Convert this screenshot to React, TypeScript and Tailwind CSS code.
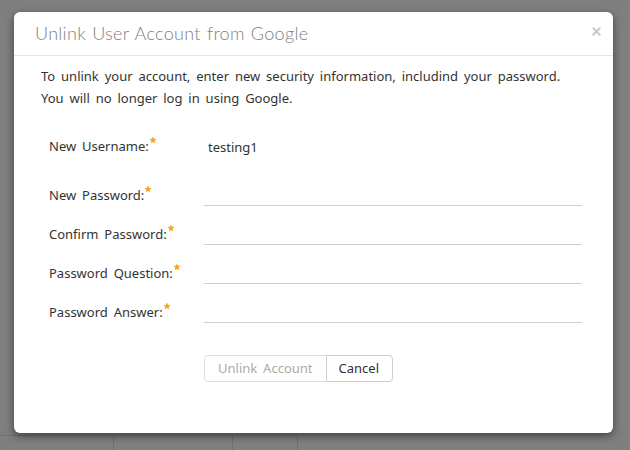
import { X } from "lucide-react"

const fields = [
    { label: "New Username:", value: "testing1" },
    { label: "New Password:" },
    { label: "Confirm Password:" },
    { label: "Password Question:" },
    { label: "Password Answer:" },
]

const Star = () => (
    <svg width="8" height="8" viewBox="0 0 24 24" className="mb-2">
        <path
            fill="#f5a623"
            d="M12 1.5l3.2 6.9 7.3.8-5.5 5 1.6 7.3L12 17.8l-6.6 3.7 1.6-7.3-5.5-5 7.3-.8z"
        />
    </svg>
)

export default function App() {
    return (
        <div
            className="relative h-[450px] w-[630px] overflow-hidden bg-[#7f7f7f] pt-3 [word-spacing:2.5px]"
            style={{ fontFamily: "'Noto Sans', 'Open Sans', sans-serif" }}
        >
            {/* page behind the overlay */}
            <div className="absolute inset-x-0 bottom-0 flex h-[15px] text-[11px] text-[#222]">
                <div className="w-[113px] border-t border-[#707070]" />
                <div className="w-[119px] border-l border-t border-[#707070]" />
                <div className="w-[66px] border-l border-r border-t border-[#707070]" />
            </div>

            <div className="relative ml-[14px] h-[421px] w-[599px] rounded-md bg-white shadow-[0_3px_9px_rgba(0,0,0,0.5)]">
                <div className="flex h-[44px] items-center justify-between border-b border-[#e5e5e5] pl-[21px] pr-[10px]">
                    <h1
                        className="text-[18px] font-light tracking-[0.3px] text-[#808080] [word-spacing:1px]"
                        style={{ fontFamily: "Lato, 'Noto Sans', sans-serif" }}
                    >
                        Unlink User Account from Google
                    </h1>
                    <X size={13} strokeWidth={3.5} className="-mt-[5px] text-[#c8c8c8]" />
                </div>

                <div className="px-[27px] pt-[9px] text-[13px] leading-[22px] text-[#333]">
                    <p>To unlink your account, enter new security information, includind your password.</p>
                    <p>You will no longer log in using Google.</p>
                </div>

                <div className="mt-[23px] flex flex-col gap-[15px] pl-[35px] pr-[31px]">
                    {fields.map((f) => (
                        <div
                            key={f.label}
                            className={f.value ? "mb-[10px] flex h-[24px] items-end" : "flex h-[24px] items-end"}
                        >
                            <div className="flex w-[155px] items-start text-[13px] text-[#333]">
                                <span className="leading-[20px]">{f.label}</span>
                                <Star />
                            </div>
                            {f.value ? (
                                <div className="mb-[-1px] pl-1 text-[13px] leading-[20px] text-[#333]">{f.value}</div>
                            ) : (
                                <div className="h-[24px] flex-1 translate-y-px border-b border-[#cfcfcf]" />
                            )}
                        </div>
                    ))}
                </div>

                <div className="mt-[33px] flex pl-[190px] text-[13px] [&>button]:[word-spacing:2.5px]">
                    <button className="h-[27px] rounded-l-[4px] border border-[#ddd] pl-[13px] pr-[13px] text-[#aaa]">
                        Unlink Account
                    </button>
                    <button className="-ml-px h-[27px] rounded-r-[4px] border border-[#ccc] pl-[12px] pr-[13px] text-[#333]">
                        Cancel
                    </button>
                </div>
            </div>
        </div>
    )
}
